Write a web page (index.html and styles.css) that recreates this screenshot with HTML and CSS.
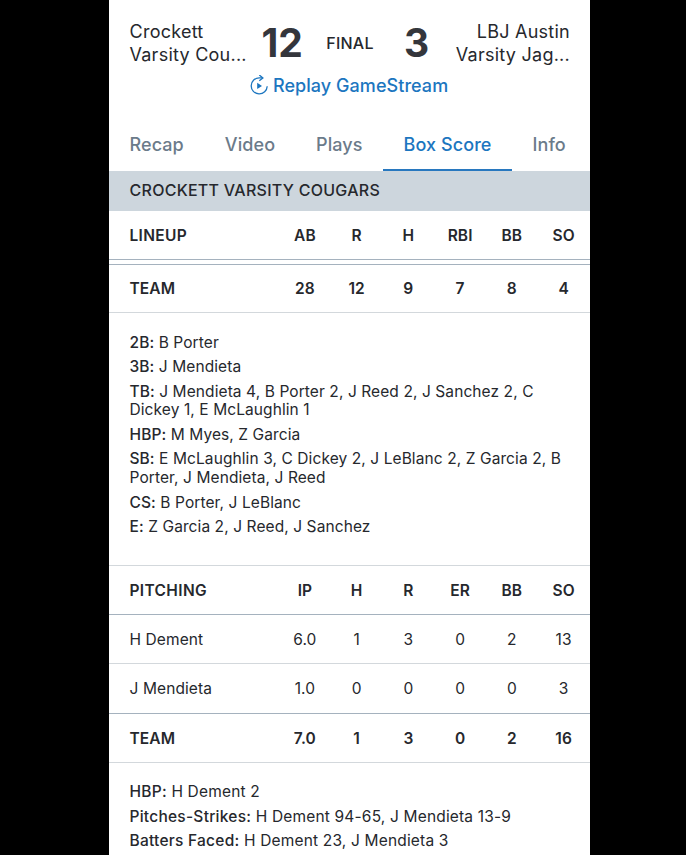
FILE: index.html
```html
<!DOCTYPE html>
<html lang="en">
<head>
    <meta charset="UTF-8">
    <meta name="viewport" content="width=device-width, initial-scale=1.0">
    <title>Box Score</title>
    <link rel="stylesheet" href="styles.css">
</head>
<body>
    <div class="screen">
        <header class="scoreboard">
            <div class="team-name">Crockett<br>Varsity Cou...</div>
            <div class="score score-away">12</div>
            <div class="status">FINAL</div>
            <div class="score score-home">3</div>
            <div class="team-name team-home">LBJ Austin<br>Varsity Jag...</div>
        </header>
        <a class="replay" href="#">
            <svg class="replay-icon" viewBox="0 0 18 20" width="18" height="20">
                <path d="M12.4 2.9H9.4A8 8 0 1 0 17.2 11.2" fill="none" stroke="currentColor" stroke-width="1.3"/>
                <path d="M9.3 0 12.9 2.9 9.3 5.8" fill="none" stroke="currentColor" stroke-width="1.3"/>
                <path d="M7.2 7.8 12 10.9 7.2 14Z" fill="currentColor"/>
            </svg>
            <span>Replay GameStream</span>
        </a>

        <nav class="tabs">
            <a class="tab" href="#">Recap</a>
            <a class="tab" href="#">Video</a>
            <a class="tab" href="#">Plays</a>
            <a class="tab active" href="#">Box Score</a>
            <a class="tab" href="#">Info</a>
        </nav>

        <h2 class="section-title">CROCKETT VARSITY COUGARS</h2>

        <div class="row head lineup-head">
            <span>LINEUP</span><span>AB</span><span>R</span><span>H</span><span>RBI</span><span>BB</span><span>SO</span>
        </div>
        <div class="row total lineup-total">
            <span>TEAM</span><span>28</span><span>12</span><span>9</span><span>7</span><span>8</span><span>4</span>
        </div>

        <div class="notes lineup-notes">
            <p><b>2B:</b> B Porter</p>
            <p><b>3B:</b> J Mendieta</p>
            <p><b>TB:</b> J Mendieta 4, B Porter 2, J Reed 2, J Sanchez 2, C<br>Dickey 1, E McLaughlin 1</p>
            <p><b>HBP:</b> M Myes, Z Garcia</p>
            <p><b>SB:</b> E McLaughlin 3, C Dickey 2, J LeBlanc 2, Z Garcia 2, B<br>Porter, J Mendieta, J Reed</p>
            <p><b>CS:</b> B Porter, J LeBlanc</p>
            <p><b>E:</b> Z Garcia 2, J Reed, J Sanchez</p>
        </div>

        <div class="row head pitching-head">
            <span>PITCHING</span><span>IP</span><span>H</span><span>R</span><span>ER</span><span>BB</span><span>SO</span>
        </div>
        <div class="row">
            <span>H Dement</span><span>6.0</span><span>1</span><span>3</span><span>0</span><span>2</span><span>13</span>
        </div>
        <div class="row last">
            <span>J Mendieta</span><span>1.0</span><span>0</span><span>0</span><span>0</span><span>0</span><span>3</span>
        </div>
        <div class="row total">
            <span>TEAM</span><span>7.0</span><span>1</span><span>3</span><span>0</span><span>2</span><span>16</span>
        </div>

        <div class="notes pitching-notes">
            <p><b>HBP:</b> H Dement 2</p>
            <p><b>Pitches-Strikes:</b> H Dement 94-65, J Mendieta 13-9</p>
            <p><b>Batters Faced:</b> H Dement 23, J Mendieta 3</p>
        </div>
    </div>
</body>
</html>
```

FILE: styles.css
```css
/* General styling */
body {
    font-family: 'Inter', sans-serif;
    margin: 0;
    background-color: #000;
    color: #26282d;
    overflow: hidden;
}

a {
    text-decoration: none;
}

.screen {
    box-sizing: border-box;
    width: 481px;
    height: 855px;
    margin-left: 109px;
    background: #fff;
    overflow: hidden;
}

/* Scoreboard */
.scoreboard {
    display: grid;
    grid-template-columns: 132px 44px 89px 44px 1fr;
    padding: 20px 20px 0 20.5px;
    height: 52px;
}

.team-name {
    font-size: 18px;
    line-height: 23px;
    letter-spacing: 0.25px;
    white-space: nowrap;
}

.team-home {
    text-align: right;
}

.score {
    font-size: 39px;
    line-height: 45px;
    font-weight: 700;
    color: #34363c;
}

.score-home {
    text-align: center;
}

.status {
    font-size: 16px;
    line-height: 46px;
    font-weight: 500;
    letter-spacing: 0.2px;
    text-align: center;
}

.replay {
    display: flex;
    align-items: center;
    gap: 5px;
    height: 26px;
    padding-left: 141px;
    color: #1c76c0;
    font-size: 18px;
    font-weight: 500;
    letter-spacing: 0.05px;
}

/* Tabs */
.tabs {
    display: flex;
    height: 52px;
    padding-top: 21px;
}

.tab {
    box-sizing: border-box;
    padding: 15px 20.5px 0;
    font-size: 18px;
    line-height: 22px;
    font-weight: 500;
    letter-spacing: 0.08px;
    color: #6b7b8a;
    white-space: nowrap;
}

.tab.active {
    color: #1c76c0;
    border-bottom: 2px solid #2878bf;
}

.section-title {
    margin: 0;
    height: 40px;
    padding-left: 20.5px;
    background: #cdd6dd;
    font-size: 16px;
    line-height: 39px;
    font-weight: 500;
    letter-spacing: 0.27px;
}

/* Stat tables */
.row {
    display: grid;
    grid-template-columns: 149.5px repeat(6, 51.75px);
    box-sizing: border-box;
    height: 49px;
    padding-left: 20.5px;
    border-bottom: 1px solid #d3d8dc;
    font-size: 15.5px;
    line-height: 49px;
    letter-spacing: 0.1px;
}

.row span + span {
    text-align: center;
}

.head,
.total {
    font-weight: 600;
}

.head span:first-child {
    letter-spacing: 0.35px;
}

.head {
    border-bottom-color: #a5b2be;
}

.last {
    height: 50px;
    border-bottom-color: #a5b2be;
}

.lineup-head {
    margin-bottom: 4px;
}

.lineup-total {
    border-top: 1px solid #a5b2be;
    line-height: 47px;
}

.pitching-head {
    height: 50px;
    border-top: 1px solid #d3d8dc;
}

/* Notes under each table */
.notes {
    padding: 20.5px 20px 0 20.5px;
    font-size: 15.5px;
    line-height: 18.75px;
    letter-spacing: 0.09px;
    white-space: nowrap;
}

.notes p {
    margin: 0 0 5.75px;
}

.notes b {
    font-weight: 500;
}

.lineup-notes {
    height: 231.5px;
}

.pitching-notes {
    padding-top: 20px;
    letter-spacing: 0.17px;
}

.pitching-notes b {
    letter-spacing: 0.25px;
}
```
